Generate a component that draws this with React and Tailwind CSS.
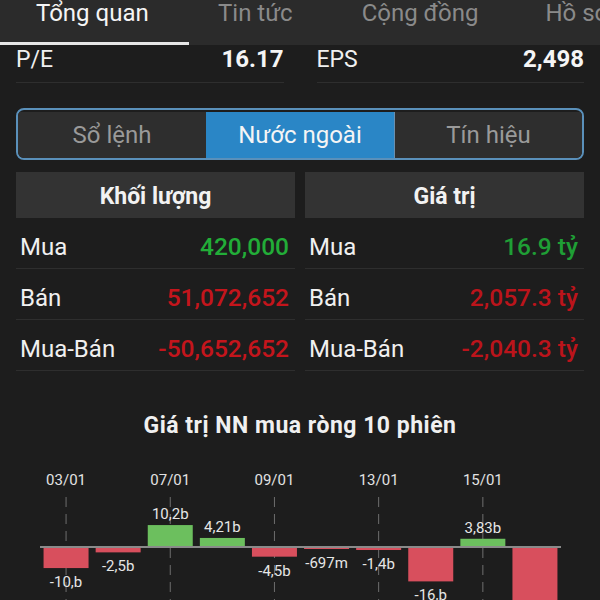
import React from 'react';

const tabs = [
  { name: 'Tổng quan', active: true, cls: 'w-[189px] pl-[36px]' },
  { name: 'Tin tức', cls: 'pl-[29px] pr-[35px]' },
  { name: 'Cộng đồng', cls: 'px-[34px]' },
  { name: 'Hồ sơ', cls: 'px-[33px]' },
];

const volumeRows = [
  { label: 'Mua', value: '420,000', color: 'text-[#22ad38]' },
  { label: 'Bán', value: '51,072,652', color: 'text-[#c4151c]' },
  { label: 'Mua-Bán', value: '-50,652,652', color: 'text-[#c4151c]' },
];

const valueRows = [
  { label: 'Mua', value: '16.9 tỷ', color: 'text-[#1f9e35]' },
  { label: 'Bán', value: '2,057.3 tỷ', color: 'text-[#bb141b]' },
  { label: 'Mua-Bán', value: '-2,040.3 tỷ', color: 'text-[#bb141b]' },
];

// giá trị NN mua ròng (tỷ)
const sessions = [
  { date: '03/01', v: -9.8, label: '-10,b' },
  { v: -2.5, label: '-2,5b' },
  { date: '07/01', v: 10.2, label: '10,2b' },
  { v: 4.21, label: '4,21b' },
  { date: '09/01', v: -4.5, label: '-4,5b' },
  { v: -0.697, label: '-697m' },
  { date: '13/01', v: -1.4, label: '-1,4b' },
  { v: -16, label: '-16,b' },
  { date: '15/01', v: 3.83, label: '3,83b' },
  { v: -32 },
];

function StatTable({ title, rows }) {
  return (
    <div>
      <div className="flex h-[46px] items-center justify-center bg-[#333333] pt-[2px] text-[23px] font-bold leading-[23px] text-[#f2f2f2]">
        {title}
      </div>
      {rows.map((r) => (
        <div
          key={r.label}
          className="flex h-[51px] items-center justify-between border-b border-[#2e2e2e] pl-[4px] pr-[6px] pt-[7px] text-[24px] leading-[24px]"
        >
          <span className="text-[#f0f0f0]">{r.label}</span>
          <span className={`text-[24.5px] font-medium ${r.color}`}>{r.value}</span>
        </div>
      ))}
    </div>
  );
}

function NetChart() {
  const zero = 92;
  const scale = 2.15;
  const left = 40;
  const slot = 52.1;
  return (
    <svg width="600" height="145" viewBox="0 0 600 145" className="block" style={{ fontFamily: 'Roboto, "Noto Sans", sans-serif' }}>
      {sessions.map((s, i) => {
        const cx = left + slot * (i + 0.5);
        if (!s.date) return null;
        return (
          <g key={'d' + i}>
            <text x={cx} y="30" textAnchor="middle" fontSize="15" fill="#e2e2e2">{s.date}</text>
            <line x1={cx} y1="42" x2={cx} y2="145" stroke="#6e6e6e" strokeWidth="1" strokeDasharray="10 7" />
          </g>
        );
      })}
      {sessions.map((s, i) => {
        const cx = left + slot * (i + 0.5);
        const h = Math.max(Math.abs(s.v) * scale, 2);
        const up = s.v > 0;
        const y = up ? zero - h : zero;
        return (
          <g key={'b' + i}>
            <rect x={cx - 22.5} y={y} width="45" height={h} fill={up ? '#6cbf5e' : '#d84f5d'} />
            {s.label && (
              <text
                x={cx}
                y={up ? zero - h - 6 : zero + h + 19}
                textAnchor="middle"
                fontSize="15"
                fill="#e6e6e6"
              >
                {s.label}
              </text>
            )}
          </g>
        );
      })}
      <line x1={left} y1={zero} x2="561" y2={zero} stroke="#8a8a8a" strokeWidth="2" />
    </svg>
  );
}

export default function App() {
  return (
    <div className="h-[600px] w-[600px] overflow-hidden bg-[#1d1d1d] font-['Roboto','Noto_Sans',sans-serif]">
      {/* tab bar */}
      <div className="flex h-[45px] bg-[#2b2b2b]">
        {tabs.map((t) => (
          <div key={t.name} className={`relative shrink-0 whitespace-nowrap pt-[1px] text-[24px] leading-[24px] ${t.cls} ${t.active ? 'text-[#f5f5f5]' : 'text-[#8a8a8a]'}`}>
            {t.name}
            {t.active && <div className="absolute bottom-0 left-0 h-[3px] w-full bg-[#e6e6e6]" />}
          </div>
        ))}
      </div>

      <main className="px-4">
        {/* P/E, EPS */}
        <div className="grid grid-cols-2 gap-[33px]">
          <div className="flex h-[38px] items-start justify-between border-b border-[#2e2e2e] pt-[3px] text-[23px] leading-[23px]">
            <span className="text-[#f0f0f0]">P/E</span>
            <span className="text-[24px] font-bold text-[#f5f5f5]">16.17</span>
          </div>
          <div className="flex h-[38px] items-start justify-between border-b border-[#2e2e2e] pt-[3px] text-[23px] leading-[23px]">
            <span className="text-[#f0f0f0]">EPS</span>
            <span className="text-[24px] font-bold text-[#f5f5f5]">2,498</span>
          </div>
        </div>

        {/* segment */}
        <div className="mt-[25px] grid h-[52px] grid-cols-3 overflow-hidden rounded-[8px] border-2 border-[#5a90ba] pt-[2px] text-[24px] leading-[24px]">
          <div className="flex items-center justify-center bg-[#2e2e2e] text-[#9a9a9a]">Sổ lệnh</div>
          <div className="flex items-center justify-center bg-[#2a86c6] text-[#f5f5f5]">Nước ngoài</div>
          <div className="flex items-center justify-center border-l border-[#6a8fae] bg-[#2e2e2e] text-[#9a9a9a]">Tín hiệu</div>
        </div>

        {/* tables */}
        <div className="mt-[12px] grid grid-cols-2 gap-[10px]">
          <StatTable title="Khối lượng" rows={volumeRows} />
          <StatTable title="Giá trị" rows={valueRows} />
        </div>
      </main>

      <h3 className="mt-[43px] text-center text-[23px] font-bold leading-[23px] tracking-[0.5px] text-[#f0f0f0]">
        Giá trị NN mua ròng 10 phiên
      </h3>
      <div className="mt-[18px]">
        <NetChart />
      </div>
    </div>
  );
}
